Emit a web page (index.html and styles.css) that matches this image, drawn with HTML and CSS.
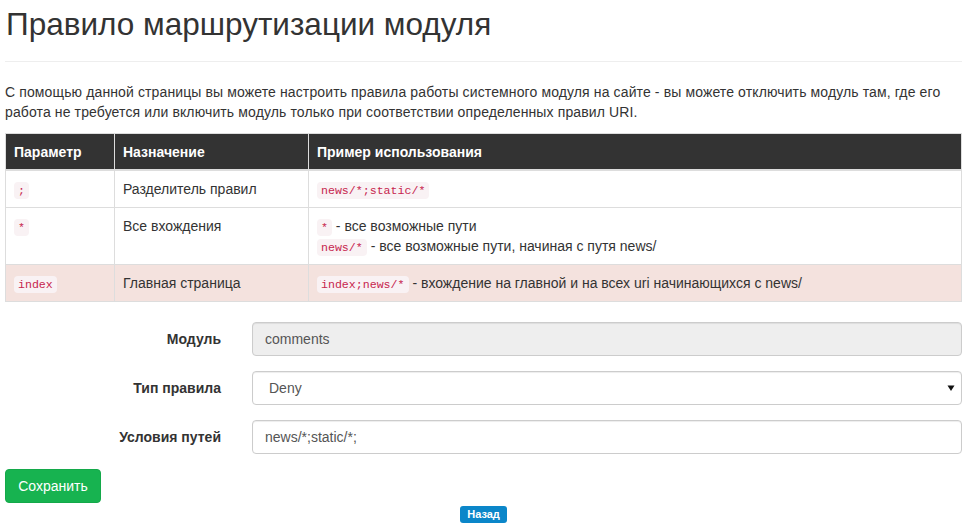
FILE: index.html
```html
<!DOCTYPE html>
<html lang="ru">
<head>
<meta charset="utf-8">
<title>Правило маршрутизации модуля</title>
<link rel="stylesheet" href="styles.css">
</head>
<body>
<div class="container">
  <div class="page-header">
    <h1>Правило маршрутизации модуля</h1>
  </div>
  <p class="intro">С помощью данной страницы вы можете настроить правила работы системного модуля на сайте - вы можете отключить модуль там, где его работа не требуется или включить модуль только при соответствии определенных правил URI.</p>

  <table class="rules">
    <colgroup>
      <col class="c1">
      <col class="c2">
      <col class="c3">
    </colgroup>
    <thead>
      <tr>
        <th>Параметр</th>
        <th>Назначение</th>
        <th>Пример использования</th>
      </tr>
    </thead>
    <tbody>
      <tr>
        <td><code>;</code></td>
        <td>Разделитель правил</td>
        <td><code>news/*;static/*</code></td>
      </tr>
      <tr>
        <td><code>*</code></td>
        <td>Все вхождения</td>
        <td><code>*</code> - все возможные пути<br><code>news/*</code> - все возможные пути, начиная с путя news/</td>
      </tr>
      <tr class="danger">
        <td><code>index</code></td>
        <td>Главная страница</td>
        <td><code>index;news/*</code> - вхождение на главной и на всех uri начинающихся с news/</td>
      </tr>
    </tbody>
  </table>

  <form class="form">
    <label class="form-label" for="module">Модуль</label>
    <input class="form-control" id="module" type="text" value="comments" disabled>

    <label class="form-label" for="type">Тип правила</label>
    <div class="select-wrap">
      <select class="form-control select" id="type">
        <option>Deny</option>
        <option>Allow</option>
      </select>
      <svg class="caret" width="8" height="8" viewBox="0 0 8 8" aria-hidden="true"><path d="M0.5 1.5 H7.5 L4 7 Z" fill="#111"/></svg>
    </div>

    <label class="form-label" for="paths">Условия путей</label>
    <input class="form-control" id="paths" type="text" value="news/*;static/*;">
  </form>

  <div class="actions">
    <button class="btn-save" type="button">Сохранить</button>
  </div>
  <div class="back">
    <span class="label-back">Назад</span>
  </div>
</div>
</body>
</html>
```

FILE: styles.css
```css
* { box-sizing: border-box; }

html, body {
  margin: 0;
  padding: 0;
  background: #fff;
}

body {
  font-family: "Liberation Sans", Arial, sans-serif;
  font-size: 14px;
  line-height: 20px;
  color: #333;
}

.container {
  padding: 0 4px 0 5px;
}

.page-header {
  border-bottom: 1px solid #eee;
  padding-bottom: 8px;
}

.page-header h1 {
  margin: 4px 0 9px 1px;
  font-size: 31.5px;
  line-height: 40px;
  font-weight: 400;
  color: #333;
}

.intro {
  margin: 20px 0 11px;
  letter-spacing: 0.12px;
}

.rules {
  width: 100%;
  border-collapse: collapse;
  table-layout: fixed;
  border: 1px solid #ddd;
  margin-bottom: 20px;
}

.rules col.c1 { width: 109px; }
.rules col.c2 { width: 194px; }

.rules th,
.rules td {
  border: 1px solid #ddd;
  padding: 8px;
  text-align: left;
  vertical-align: top;
  line-height: 20px;
}

.rules thead th {
  background: #333;
  color: #fff;
  font-weight: 700;
  border-bottom: 2px solid #ddd;
  padding: 8px 8px 7px;
}

.rules tr.danger td {
  background: #f4e2de;
}

code {
  font-family: "Liberation Mono", "DejaVu Sans Mono", monospace;
  font-size: 11.6px;
  line-height: 1;
  padding: 2px 4px;
  color: #c7254e;
  background: #f9f2f4;
  border-radius: 4px;
}

.form {
  display: grid;
  grid-template-columns: 231px 1fr;
  column-gap: 16px;
  row-gap: 15px;
  align-items: center;
  margin: 0 0 15px;
}

.form-label {
  text-align: right;
  font-weight: 700;
  padding-right: 15px;
}

.form-control {
  display: block;
  width: 100%;
  height: 34px;
  padding: 6px 12px;
  font-family: "Liberation Sans", Arial, sans-serif;
  font-size: 14px;
  line-height: 20px;
  color: #555;
  background: #fff;
  border: 1px solid #ccc;
  border-radius: 4px;
  box-shadow: inset 0 1px 1px rgba(0,0,0,.075);
}

.form-control:disabled {
  background: #eee;
  color: #555;
  opacity: 1;
}

.select-wrap {
  position: relative;
}

.select {
  appearance: none;
  -webkit-appearance: none;
  padding-left: 16px;
}

.caret {
  position: absolute;
  right: 7px;
  top: 13px;
  pointer-events: none;
}

.actions {
  display: flex;
}

.btn-save {
  height: 34px;
  padding: 6px 12px;
  font-family: "Liberation Sans", Arial, sans-serif;
  font-size: 14px;
  line-height: 20px;
  color: #fff;
  background: #17b350;
  border: 1px solid #14a94a;
  border-radius: 4px;
  width: 96px;
}

.back {
  display: flex;
  justify-content: center;
  margin-top: 3px;
}

.label-back {
  display: inline-block;
  background: #0b86c9;
  color: #fff;
  font-weight: 700;
  font-size: 11px;
  line-height: 11px;
  padding: 3px 7px;
  border-radius: 3px;
}
```
